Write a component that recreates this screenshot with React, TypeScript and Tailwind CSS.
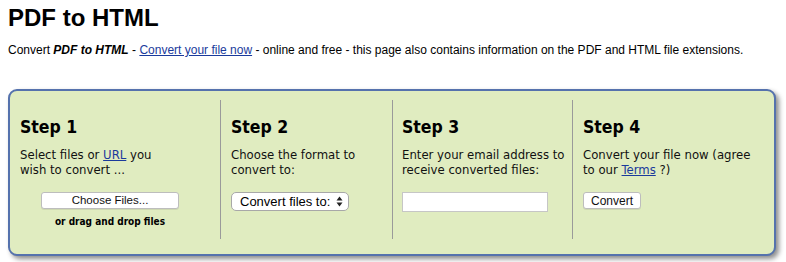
import React from "react";

const body = { fontFamily: '"DejaVu Sans Condensed", "DejaVu Sans", sans-serif', fontStretch: "condensed" } as React.CSSProperties;
const arial = { fontFamily: '"Liberation Sans", Arial, sans-serif' } as React.CSSProperties;

function StepTitle({ children }: { children: React.ReactNode }) {
  return (
    <div className="text-[17.5px] leading-[20px] font-bold text-black whitespace-nowrap" style={body}>
      {children}
    </div>
  );
}

function StepText({ children }: { children: React.ReactNode }) {
  return (
    <div className="mt-[10px] text-[13px] leading-[15px] text-[#111] whitespace-nowrap" style={body}>
      {children}
    </div>
  );
}

export default function App() {
  return (
    <div className="w-[786px] h-[262px] bg-white overflow-hidden">
      <h1 className="pt-[4px] pl-[8px] text-[24px] leading-[28px] font-bold text-black" style={arial}>
        PDF to HTML
      </h1>
      <p className="mt-[11px] pl-[8px] text-[12px] leading-[15px] text-black whitespace-nowrap" style={arial}>
        Convert <b><i>PDF to HTML</i></b> -{" "}
        <a className="text-[#1a3a9c] underline">Convert your file now</a> - online and free - this page also
        contains information on the PDF and HTML file extensions.
      </p>

      <div className="mt-[31px] ml-[8px] w-[768px] h-[167px] rounded-[9px] border-2 border-[#5572ad] bg-[#e0ecc0] shadow-[3px_3px_5px_rgba(0,0,0,0.45)] flex pt-[9px]">
        {/* Step 1 */}
        <div className="w-[210px] h-[139px] pl-[10px] pt-[17px]">
          <div className="w-[180px]">
            <StepTitle>Step 1</StepTitle>
            <StepText>
              Select files or <a className="text-[#1a3a9c] underline">URL</a> you
              <br />
              wish to convert ...
            </StepText>
            <div className="mt-[15px] flex flex-col items-center">
              <div
                className="w-[138px] h-[17px] rounded-[3px] border border-[#bdbdbd] bg-white flex items-center justify-center text-[11.5px] text-[#111] shadow-[0_1px_0_rgba(0,0,0,0.08)]"
                style={arial}
              >
                Choose Files...
              </div>
              <div className="mt-[6px] text-[10px] leading-[13px] font-bold text-black whitespace-nowrap" style={body}>
                or drag and drop files
              </div>
            </div>
          </div>
        </div>

        {/* Step 2 */}
        <div className="w-[172px] h-[139px] border-l border-[#9a9a9a] pl-[10px] pt-[17px]">
          <StepTitle>Step 2</StepTitle>
          <StepText>
            Choose the format to
            <br />
            convert to:
          </StepText>
          <div
            className="mt-[15px] w-[118px] h-[19px] rounded-[5px] border border-[#a8a8a8] bg-white flex items-center justify-between pl-[8px] pr-[5px] text-[13px] text-black"
            style={arial}
          >
            <span className="whitespace-nowrap">Convert files to:</span>
            <svg width="7" height="11" viewBox="0 0 7 11">
              <path d="M3.5 0.5 L6.5 4.5 L0.5 4.5 Z" fill="#222" />
              <path d="M3.5 10.5 L6.5 6.5 L0.5 6.5 Z" fill="#222" />
            </svg>
          </div>
        </div>

        {/* Step 3 */}
        <div className="w-[180px] h-[139px] border-l border-[#9a9a9a] pl-[9px] pt-[17px]">
          <StepTitle>Step 3</StepTitle>
          <StepText>
            Enter your email address to
            <br />
            receive converted files:
          </StepText>
          <div className="mt-[15px] w-[146px] h-[20px] border border-[#c6c6c6] bg-white" />
        </div>

        {/* Step 4 */}
        <div className="flex-1 h-[139px] border-l border-[#9a9a9a] pl-[10px] pt-[17px]">
          <StepTitle>Step 4</StepTitle>
          <StepText>
            Convert your file now (agree
            <br />
            to our <a className="text-[#1a3a9c] underline">Terms</a> ?)
          </StepText>
          <div
            className="mt-[15px] w-[58px] h-[17px] rounded-[3px] border border-[#bdbdbd] bg-white flex items-center justify-center text-[12px] text-[#111] shadow-[0_1px_0_rgba(0,0,0,0.08)]"
            style={arial}
          >
            Convert
          </div>
        </div>
      </div>
    </div>
  );
}
